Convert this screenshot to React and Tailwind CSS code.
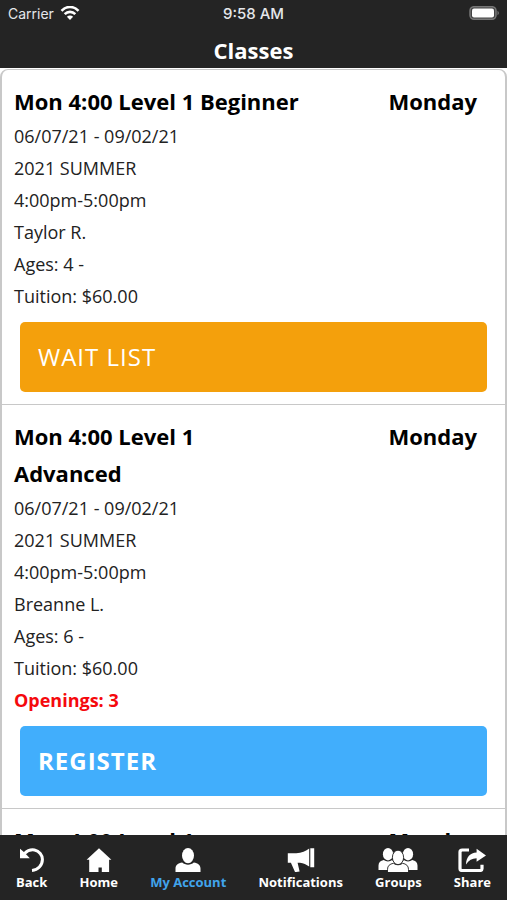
import clsx from "clsx";

const classes = [
  {
    id: 1,
    title: "Mon 4:00 Level 1 Beginner",
    day: "Monday",
    details: ["06/07/21 - 09/02/21", "2021 SUMMER", "4:00pm-5:00pm", "Taylor R.", "Ages: 4 -", "Tuition: $60.00"],
    action: "WAIT LIST",
  },
  {
    id: 2,
    title: "Mon 4:00 Level 1 Advanced",
    day: "Monday",
    details: ["06/07/21 - 09/02/21", "2021 SUMMER", "4:00pm-5:00pm", "Breanne L.", "Ages: 6 -", "Tuition: $60.00"],
    openings: 3,
    action: "REGISTER",
  },
  {
    id: 3,
    title: "Mon 4:00 Level 1",
    day: "Monday",
    details: [],
  },
];

function BackIcon() {
  return (
    <svg className="h-6 w-7" viewBox="0 0 28 24" fill="none">
      <path d="M6.500 5.500C9.500 2.500 13 1.400 16.500 2c4.700 1 8 5 7.900 9.600-.1 5.700-4.400 10.400-10.400 10.900" stroke="white" strokeWidth="3" />
      <path d="M2 .8v9.400h9.800L9 7.300 5.300 3.500z" fill="white" />
    </svg>
  );
}

function HomeIcon() {
  return (
    <svg className="h-6 w-7" viewBox="0 0 28 24" fill="white">
      <path d="M14 .2 26.400 11.800h-2.300V24h-7.300v-4.600h-3.300V24H4.200V11.800H1.600z" />
    </svg>
  );
}

function AccountIcon() {
  return (
    <svg className="h-6 w-7" viewBox="0 0 28 24" fill="white">
      <ellipse cx="14" cy="7.600" rx="6" ry="7.600" />
      <path d="M1.500 24v-3.500c0-3.500 2.500-5.300 6.700-6 1.600 1.400 3.500 2.200 5.800 2.200s4.200-.8 5.800-2.200c4.200.7 6.700 2.500 6.700 6V24z" />
    </svg>
  );
}

function MegaphoneIcon() {
  return (
    <svg className="h-6 w-7" viewBox="0 0 28 24" fill="white">
      <path d="M.8 5.300h8.400c5.400-.4 9.800-2.300 13-4.800V18.500c-2.900-2-5.700-3.200-9.200-3.800h-2.400l2 8.700-4.500.8-4.200-9.500H.8z" />
      <path d="M23.300.2H27.200V19.200h-3.900z" />
    </svg>
  );
}

function GroupsIcon() {
  return (
    <svg className="h-6 w-10" viewBox="0 0 40 24" fill="white">
      <ellipse cx="10" cy="6.200" rx="5.100" ry="6.200" />
      <ellipse cx="30" cy="6.200" rx="5.100" ry="6.200" />
      <path d="M.5 22v-4.500c0-3.200 2-4.800 5.300-5.500 2.300 1.900 6 1.900 8.400 0l2 3V22zM39.500 22v-4.500c0-3.200-2-4.800-5.300-5.500-2.300 1.900-6 1.900-8.400 0l-2 3V22z" />
      <g stroke="#242424" strokeWidth="0.900">
        <path d="M9.500 24.600v-3.200c0-3.700 2.300-5.400 5.900-6.100 2.800 2 6.400 2 9.200 0 3.600.7 5.900 2.400 5.900 6.100v3.200z" />
        <ellipse cx="20" cy="9.400" rx="5.600" ry="7.200" />
      </g>
    </svg>
  );
}

function ShareIcon() {
  return (
    <svg className="h-6 w-7" viewBox="0 0 28 24" fill="none">
      <path d="M11 2H4.200C2.600 2 2 2.600 2 4v16.500C2 22 2.600 22.500 4 22.500h18c1.600 0 2-.5 2-1.800v-4" stroke="white" strokeWidth="3.200" />
      <path d="M18.600.8 28 7.400 18.600 13.800V10.200c-4.500 0-7.900 2-10.600 6.200C8.300 9 12 5 18.600 4.600z" fill="white" />
    </svg>
  );
}

const tabs = [
  { label: "Back", Icon: BackIcon },
  { label: "Home", Icon: HomeIcon },
  { label: "My Account", Icon: AccountIcon, active: true },
  { label: "Notifications", Icon: MegaphoneIcon },
  { label: "Groups", Icon: GroupsIcon },
  { label: "Share", Icon: ShareIcon },
];

function StatusBar() {
  return (
    <div className="grid h-7 grid-cols-3 items-center px-2 font-[Inter,sans-serif] text-sm text-gray-200">
      <div className="flex items-center gap-1.5">
        <span>Carrier</span>
        <svg className="h-4 w-5" viewBox="0 0 20 16" fill="none" stroke="white" strokeWidth="2.600">
          <path d="M1.500 4.800C6.300-.3 13.700-.3 18.500 4.800" />
          <path d="M4.700 8.200c3-3.100 7.600-3.100 10.600 0" />
          <path d="M10 14 6.900 10.800c1.800-1.800 4.400-1.800 6.200 0z" fill="white" stroke="none" />
        </svg>
      </div>
      <span className="text-center text-[15px] font-medium">9:58 AM</span>
      <svg className="h-4 w-[30px] justify-self-end" viewBox="0 1 30 16">
        <rect x="1" y="1.700" width="26" height="12.600" rx="4" fill="#444" stroke="#777" strokeWidth="1.500" />
        <rect x="3" y="3.500" width="22" height="9" rx="2" fill="white" />
        <path d="M28.500 5.700c1.800.8 1.800 3.700 0 4.500z" fill="#777" />
      </svg>
    </div>
  );
}

function ClassCard({ item }) {
  return (
    <li className="border-b border-[#c8c8c8] px-3 pt-[13px] pb-3">
      <div className="flex justify-between gap-3 pr-4 text-[22px] leading-[37px] font-bold text-black">
        <h2 className="max-w-72">{item.title}</h2>
        <span>{item.day}</span>
      </div>
      <div className="text-lg leading-8 text-[#222]">
        {item.details.map((line) => (
          <p key={line}>{line}</p>
        ))}
        {item.openings && <p className="font-bold text-[#f5090d]">Openings: {item.openings}</p>}
      </div>
      {item.action && (
        <div className="px-1.5 pt-2.5">
          <button
            type="button"
            className={clsx(
              "flex h-[70px] w-full items-center rounded-[5px] px-[18px] text-2xl tracking-[1px] text-white",
              item.openings ? "bg-[#41aefc] font-bold" : "bg-[#f4a00c]"
            )}
          >
            {item.action}
          </button>
        </div>
      )}
    </li>
  );
}

export default function App() {
  return (
    <div className="flex h-screen flex-col overflow-hidden bg-white font-['Open_Sans',sans-serif]">
      <header className="shrink-0 bg-[#242424] text-white">
        <StatusBar />
        <h1 className="pt-1 text-center text-[22px] leading-9 font-bold">Classes</h1>
      </header>

      <main className="min-h-0 flex-1 overflow-hidden pt-px">
        <ul className="rounded-t-lg border-2 border-t border-[#c8c8c8]">
          {classes.map((item) => (
            <ClassCard key={item.id} item={item} />
          ))}
        </ul>
      </main>

      <nav className="flex h-[65px] shrink-0 items-start justify-between bg-[#242424] px-4 pt-[13px]">
        {tabs.map(({ label, Icon, active }) => (
          <a
            key={label}
            href="#"
            className={clsx(
              "flex flex-col items-center text-[13px] leading-5 font-bold",
              active ? "text-[#41a4ec]" : "text-white"
            )}
          >
            <Icon />
            {label}
          </a>
        ))}
      </nav>
    </div>
  );
}
